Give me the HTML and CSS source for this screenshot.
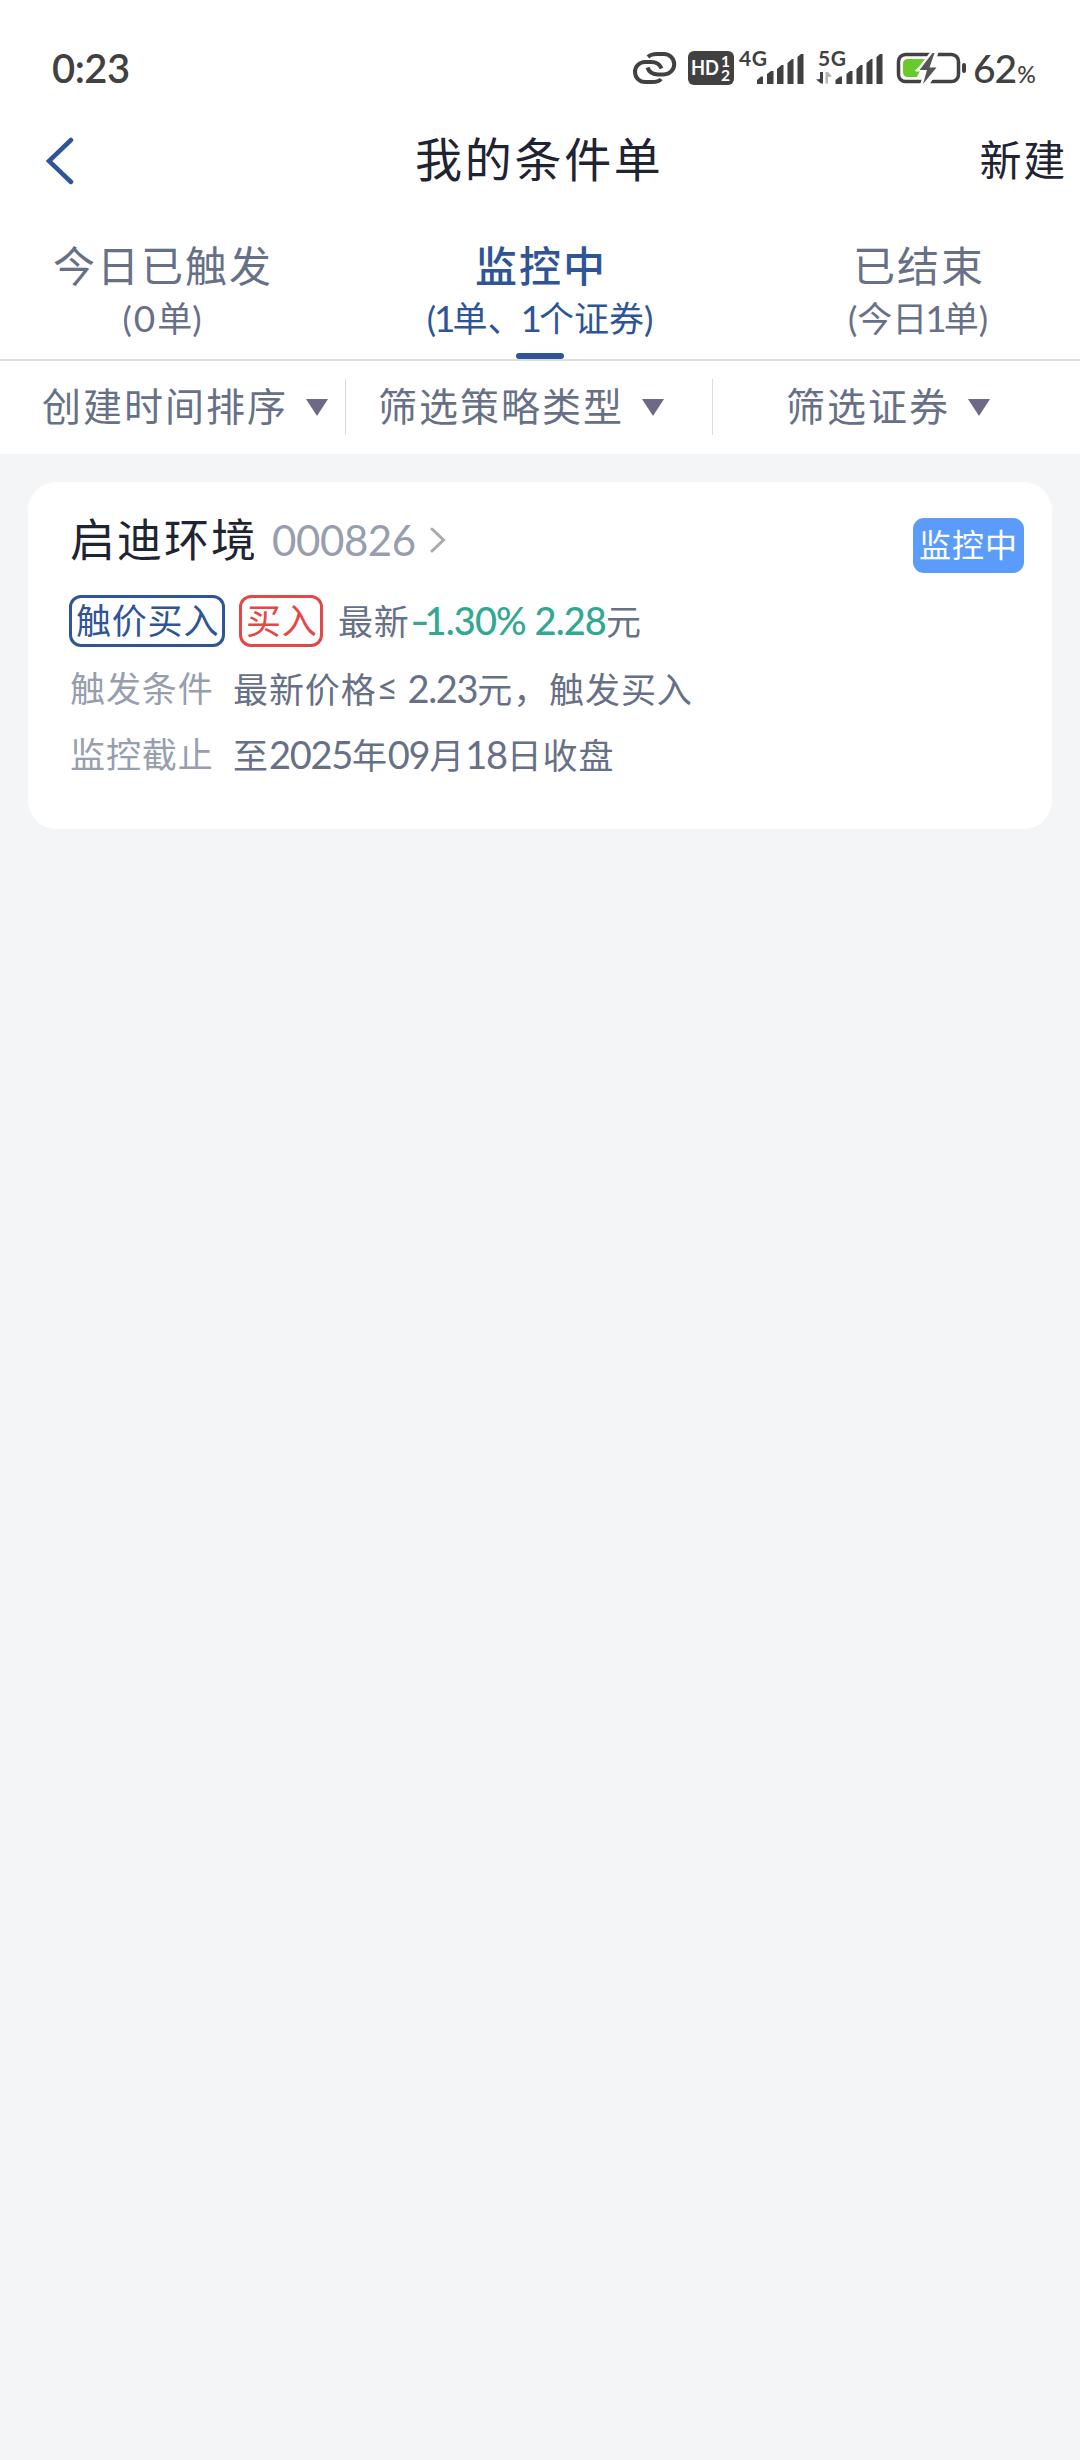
FILE: index.html
```html
<!DOCTYPE html>
<html lang="zh-CN">

<head>
    <meta charset="UTF-8">
    <title>我的条件单</title>
    <link rel="stylesheet" href="styles.css">
</head>

<body>

    <div class="status-bar">
        <span class="time">0:23</span>
        <div class="status-icons">
            <svg class="icon-link" width="44" height="40" viewBox="0 0 44 40">
                <path d="M15 9C18 6 21 6 24 6H31A10.2 10.2 0 0 1 31 26.4H25C19 26.4 16 24 14.5 19.5"/>
                <path d="M28 31C26 34 22 34 19 34H12A10 10 0 0 1 12 14H18C24 14 27 16.500 28.500 20.500"/>
            </svg>
            <svg class="icon-hd" width="46" height="40" viewBox="0 0 46 40">
                <rect x="0" y="3" width="46" height="34" rx="6"/>
                <text x="3" y="27" font-size="20.500" textLength="28" lengthAdjust="spacingAndGlyphs">HD</text>
                <text x="33" y="18.500" font-size="15.500">1</text>
                <text x="33" y="33" font-size="15.500">2</text>
            </svg>
            <svg class="icon-signal" width="66" height="40" viewBox="0 0 66 40">
                <text x="0" y="18" textLength="28">4G</text>
                <path d="M18 36V32L22 28.500H24V36zM28 36V26L32 23H34.500V36zM38 36V21L42.500 17H44.500V36zM48.500 36V15L53 11H54.500V36zM58.500 36V9L62 6H64.500V36z"/>
            </svg>
            <svg class="icon-signal icon-signal-5g" width="68" height="40" viewBox="0 0 68 40">
                <text x="2" y="18" textLength="28">5G</text>
                <path d="M0 31.500L4 31V24H7V35.500H5z"/>
                <path class="dim" d="M9.500 24H12L16 28.500L12 29V35.500H9.500z"/>
                <path d="M19.500 36V32L24 28.500H26V36zM30.500 36V26L34 23H36.500V36zM40.500 36V21L44.500 17H46.500V36zM50.500 36V15L55 11H56.500V36zM60.500 36V9L64 6H66.500V36z"/>
            </svg>
            <svg class="icon-battery" width="70" height="40" viewBox="0 0 70 40">
                <rect class="shell" x="2.500" y="6.500" width="60" height="27" rx="7"/>
                <rect class="nub" x="66" y="15" width="4" height="10" rx="2"/>
                <path class="level" d="M12 11H31L18.500 23H24L21 29H12Q7 29 7 24V16Q7 11 12 11z"/>
                <path class="bolt" d="M35 3L19.500 23.500H28L24 37H33L46 17.500H38L43 3z"/>
                <path class="bolt-fill" d="M36.500 5L23.500 22H31L27 36L40.500 19.500H33.500L38.500 5z"/>
            </svg>
            <span class="battery-text">62<small>%</small></span>
        </div>
    </div>

    <div class="nav-bar">
        <svg class="back" width="30" height="50" viewBox="0 0 30 50">
            <path d="M26 5L4 26L26 47"/>
        </svg>
        <h1>我的条件单</h1>
        <a class="create">新建</a>
    </div>

    <div class="tabs">
        <div class="tab">
            <span class="tab-name">今日已触发</span>
            <span class="tab-count">(<span class="zero">0</span>单)</span>
        </div>
        <div class="tab active">
            <span class="tab-name">监控中</span>
            <span class="tab-count">(<span class="one">1</span>单、<span class="one">1</span>个证券)</span>
        </div>
        <div class="tab">
            <span class="tab-name">已结束</span>
            <span class="tab-count">(今日<span class="one">1</span>单)</span>
        </div>
    </div>

    <div class="filters">
        <div class="filter filter-sort"><span>创建时间排序</span><i class="arrow"></i></div>
        <div class="filter filter-type"><span>筛选策略类型</span><i class="arrow"></i></div>
        <div class="filter filter-stock"><span>筛选证券</span><i class="arrow"></i></div>
    </div>

    <div class="card">
        <div class="card-head">
            <span class="stock-name">启迪环境</span>
            <span class="stock-code">000826</span>
            <svg class="more" width="16" height="26" viewBox="0 0 16 26">
                <path d="M2 2L13.500 13L2 24"/>
            </svg>
            <span class="badge">监控中</span>
        </div>
        <div class="card-tags">
            <span class="tag tag-blue">触价买入</span>
            <span class="tag tag-red">买入</span>
            <span class="latest">最新<span class="down"><span class="minus">-</span>1.30% 2.28</span>元</span>
        </div>
        <div class="card-row">
            <span class="label">触发条件</span>
            <span class="value">最新价格<span class="le">≤</span><span class="num"> 2.23</span>元，触发买入</span>
        </div>
        <div class="card-row">
            <span class="label">监控截止</span>
            <span class="value">至<span class="num">2025</span>年<span class="num">09</span>月<span class="num">18</span>日收盘</span>
        </div>
    </div>

</body>

</html>
```

FILE: styles.css
```css
* {
    box-sizing: border-box;
}

body {
    margin: 0;
    min-height: 2460px;
    background-color: #f3f5f7;
    font-family: Lato, "Noto Sans CJK SC", sans-serif;
    color: #1f2433;
}

/* System status bar */
.status-bar {
    display: flex;
    justify-content: space-between;
    height: 120px;
    padding: 48px 44px 0 52px;
    background-color: #fff;
    color: #414141;
}

.time {
    font-size: 40px;
    font-weight: 600;
    line-height: 40px;
    letter-spacing: -0.5px;
}

.status-icons {
    display: flex;
    height: 40px;
}

.status-icons svg {
    overflow: visible;
}

.icon-link {
    fill: none;
    stroke: #414141;
    stroke-width: 4;
}

.icon-hd {
    margin-left: 11px;
    margin-right: 5px;
    fill: #414141;
}

.icon-hd text {
    fill: #fff;
    font-weight: bold;
}

.icon-signal {
    fill: #414141;
}

.icon-signal text {
    font-size: 21px;
    font-weight: bold;
}

.icon-signal-5g {
    margin-left: 11px;
    margin-right: 12px;
}

.icon-signal .dim {
    fill: #b5b5b5;
}

.icon-battery .shell {
    fill: none;
    stroke: #414141;
    stroke-width: 3.5;
}

.icon-battery .nub {
    fill: #414141;
}

.icon-battery .level {
    fill: #67cb2b;
}

.icon-battery .bolt {
    fill: #fff;
}

.icon-battery .bolt-fill {
    fill: #555;
}

.battery-text {
    width: 63px;
    margin-left: 7px;
    font-size: 39px;
    font-weight: 500;
    line-height: 40px;
    letter-spacing: -1px;
    white-space: nowrap;
}

.battery-text small {
    margin-left: 1px;
    font-size: 23px;
}

/* Title bar */
.nav-bar {
    display: flex;
    align-items: center;
    justify-content: space-between;
    height: 80px;
    padding: 0 13px 0 45px;
    background-color: #fff;
}

.back {
    margin-right: 24px;
    fill: none;
    stroke: #2f5597;
    stroke-width: 4.5;
    stroke-linecap: round;
}

.nav-bar h1 {
    margin: 0 0 2px;
    font-size: 47px;
    font-weight: normal;
    line-height: 78px;
    letter-spacing: 2.7px;
}

.create {
    margin-bottom: 5px;
    font-size: 42px;
    letter-spacing: 1.7px;
}

/* Tabs */
.tabs {
    display: grid;
    grid-template-columns: 324px 432px 324px;
    height: 161px;
    padding-top: 40px;
    background-color: #fff;
    border-bottom: 2px solid #ddd;
}

.tab {
    display: flex;
    flex-direction: column;
    align-items: center;
    position: relative;
    color: #677087;
}

.tab-name {
    margin-left: 2px;
    font-size: 42px;
    line-height: 52px;
    letter-spacing: 2px;
}

.tab-count {
    font-size: 35px;
    line-height: 52px;
}

.zero {
    margin: 0 2px;
    font-size: 37px;
}

.one {
    margin: 0 -3px 0 -2px;
    font-size: 37px;
}

.tab.active {
    color: #2f5597;
}

.tab.active .tab-name {
    font-weight: 500;
}

.tab.active::after {
    content: "";
    position: absolute;
    bottom: 0;
    left: 192px;
    width: 48px;
    height: 6px;
    border-radius: 3px;
    background-color: #2f5597;
}

/* Filters */
.filters {
    display: flex;
    align-items: center;
    height: 93px;
    padding-bottom: 2px;
    background-color: #fff;
}

.filter {
    display: flex;
    align-items: center;
    height: 56px;
    color: #677087;
    font-size: 39px;
    letter-spacing: 2px;
}

.filter span {
    margin-bottom: 5px;
}

.filter-sort {
    width: 346px;
    padding-left: 42px;
    border-right: 1px solid #ddd;
}

.filter-type {
    width: 367px;
    padding-left: 32px;
    border-right: 1px solid #ddd;
}

.filter-stock {
    padding-left: 73px;
}

.arrow {
    margin: 2px 0 0 18px;
    border: 11px solid transparent;
    border-top: 17px solid #6c6a85;
    border-bottom: none;
}

/* Order card */
.card {
    height: 347px;
    margin: 28px;
    padding: 36px 28px 0 42px;
    border-radius: 28px;
    background-color: #fff;
}

.card-head {
    display: flex;
    height: 55px;
}

.stock-name {
    font-size: 45px;
    line-height: 44px;
    letter-spacing: 2px;
}

.stock-code {
    margin-left: 14px;
    color: #979eae;
    font-size: 42px;
    line-height: 44px;
    letter-spacing: -0.4px;
}

.more {
    margin: 9px 0 0 14px;
    fill: none;
    stroke: #aaa;
    stroke-width: 3;
    stroke-linecap: round;
}

.badge {
    width: 111px;
    height: 55px;
    margin-left: auto;
    border-radius: 11px;
    background-color: #5b9cfb;
    color: #fff;
    font-size: 32px;
    line-height: 54px;
    letter-spacing: 1px;
    text-align: center;
}

.card-tags {
    display: flex;
    height: 52px;
    margin: 22px 0 14px -1px;
}

.tag {
    margin-right: 14px;
    padding: 0 4px;
    border: 3px solid;
    border-radius: 12px;
    font-size: 35px;
    line-height: 44px;
    letter-spacing: 0.8px;
    white-space: nowrap;
}

.tag-blue {
    width: 156px;
    color: #2f5597;
}

.tag-red {
    width: 84px;
    color: #e34847;
}

.latest {
    margin-left: 1px;
    color: #677087;
    font-size: 35px;
    line-height: 50px;
    letter-spacing: 0.8px;
}

.down {
    color: #32a890;
    font-size: 38px;
    font-weight: 500;
    letter-spacing: -0.9px;
}

.minus {
    display: inline-block;
    width: 15px;
    transform: scaleX(1.4);
    transform-origin: left;
}

.card-row {
    display: flex;
    height: 66px;
    color: #677087;
    font-size: 35px;
    line-height: 54px;
    letter-spacing: 0.9px;
}

.label {
    width: 163px;
    color: #979eae;
}

.num {
    font-size: 38px;
    letter-spacing: -1.3px;
}

.le {
    position: relative;
    top: -3px;
    font-size: 37px;
}
```
